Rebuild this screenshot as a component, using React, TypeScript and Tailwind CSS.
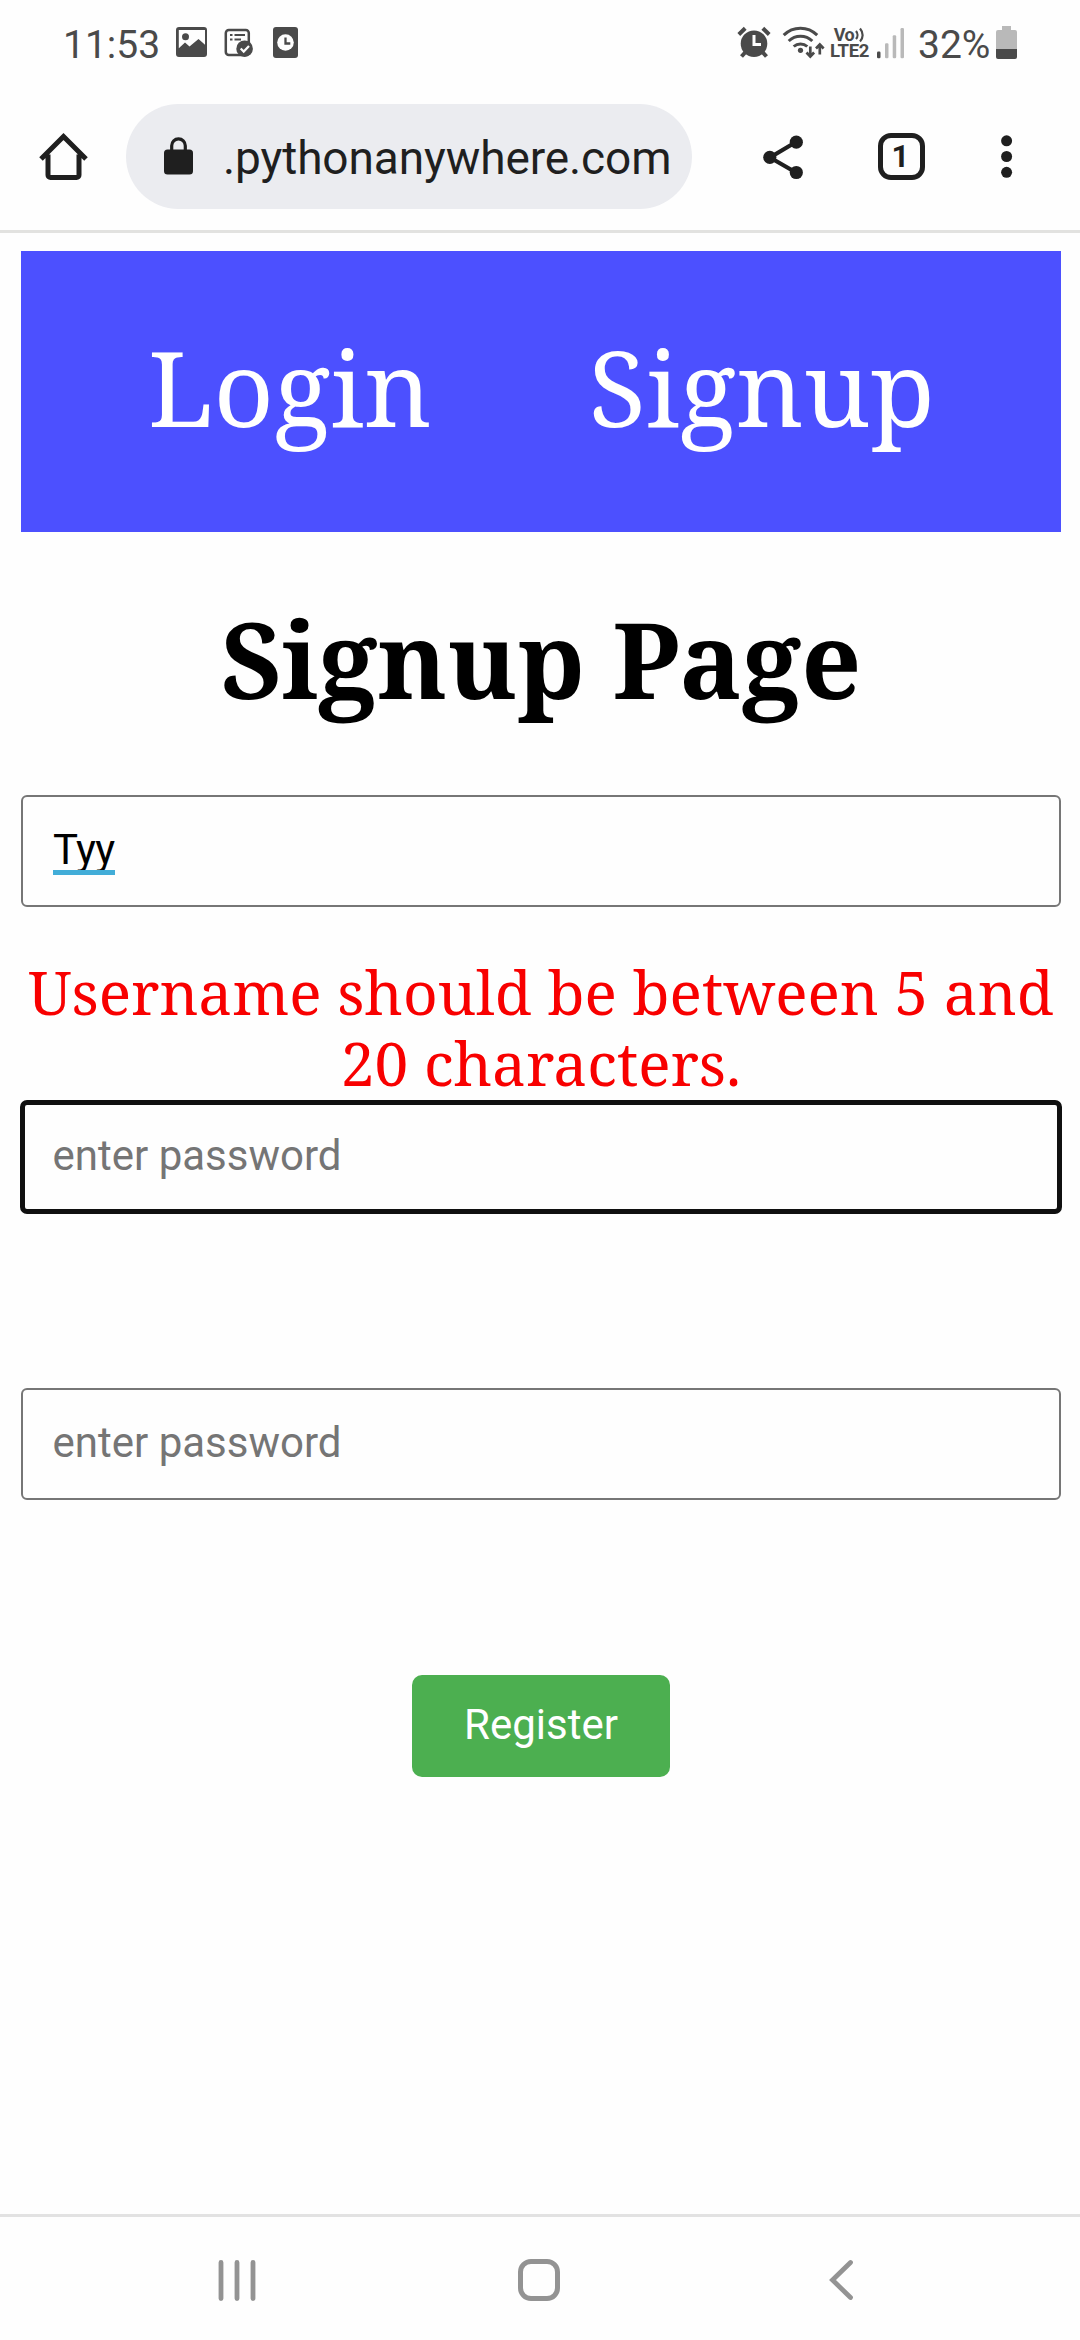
import type { ReactNode } from "react";

/** An icon drawn in screen pixels; the view box is cut from the bar that holds it. */
function Glyph({ x, y, w, h, className = "", children }: { x: number; y: number; w: number; h: number; className?: string; children: ReactNode }) {
  return (
    <svg width={w} height={h} viewBox={`${x} ${y} ${w} ${h}`} className={`shrink-0 ${className}`} fill="currentColor" aria-hidden="true">
      {children}
    </svg>
  );
}

function StatusBar() {
  return (
    <header className="flex h-[84px] items-start justify-between pl-[63px] pr-[63px] text-[#4a4a4a]">
      <div className="flex items-start">
        <span className="w-[113px] pt-[22px] text-[39px] leading-[46px]">11:53</span>
        <Glyph x={176} y={0} w={31} h={84}>
          <path fillRule="evenodd" d="M179 27h25a3 3 0 0 1 3 3v24a3 3 0 0 1-3 3h-25a3 3 0 0 1-3-3V30a3 3 0 0 1 3-3Zm-.2 3v18.2l6.2-5.7 4.5 4 9-7.5 6.500 5.800V30Z" />
          <circle cx="185.500" cy="36.800" r="3.500" />
        </Glyph>
        <Glyph x={224} y={0} w={30} h={84} className="ml-[17px]">
          <rect x="225.800" y="30" width="23" height="25" rx="3" fill="none" stroke="currentColor" strokeWidth="2.500" />
          <path d="M230 34h2.500v2H230zM234.500 34h10.500v2h-10.500zM230 38.500h2.500v2H230zM234.500 38.500h6.500v2h-6.500z" />
          <circle cx="244.600" cy="48.700" r="8.300" />
          <path d="m240.700 48.500 3 3.100 5.300-5.600" fill="none" stroke="#fefefe" strokeWidth="2.200" />
        </Glyph>
        <Glyph x={273} y={0} w={26} h={84} className="ml-[19px]">
          <rect x="273" y="27" width="25" height="31" rx="3" />
          <circle cx="285.500" cy="42.500" r="8.300" fill="#fefefe" />
          <path d="M285.500 37.500v6h4.800" fill="none" stroke="currentColor" strokeWidth="2.300" />
        </Glyph>
      </div>
      <div className="flex items-start">
        <Glyph x={737} y={0} w={35} h={84}>
          <circle cx="754" cy="43.700" r="13.300" />
          <path d="m738.800 34.500 6.400-6.200M769.200 34.500l-6.400-6.200" stroke="currentColor" strokeWidth="4" />
          <path d="m746 51.500-4.500 5M762 51.500l4.500 5" stroke="currentColor" strokeWidth="4" />
          <path d="M754 35v9.500h7" fill="none" stroke="#fefefe" strokeWidth="3" />
        </Glyph>
        <Glyph x={782} y={0} w={44} h={84} className="ml-[10px]">
          <g fill="none" stroke="currentColor" strokeWidth="3">
            <path d="M783.700 35.200c9.500-9.200 24-9.200 33.500 0" />
            <path d="M788.700 41c6.600-6.300 17-6.300 23.600 0" />
            <path d="M793.700 46.500c3.900-3.500 9.700-3.500 13.600 0" />
          </g>
          <circle cx="800.500" cy="50.300" r="2.600" />
          <g fill="none" stroke="currentColor" strokeWidth="2.700">
            <path d="M810.300 46.500v10M806.500 52.500l3.800 4 3.800-4" />
            <path d="M819.800 54.500v-10M816 48.500l3.800-4 3.800 4" />
          </g>
        </Glyph>
        <div className="ml-[3px] flex w-[41px] flex-col items-center pt-[26px] font-bold">
          <span className="flex h-[17px] items-center text-[18px] leading-[17px] tracking-[-0.5px]">
            Vo
            <Glyph x={0} y={0} w={11} h={17}>
              <path d="M2 5c2 2.300 2 5.700 0 8M6 2.500c3.500 4 3.500 9.500 0 13" fill="none" stroke="currentColor" strokeWidth="2.200" />
            </Glyph>
          </span>
          <span className="text-[18.500px] leading-[17px] tracking-[-0.3px]">LTE2</span>
        </div>
        <Glyph x={876} y={0} w={29} h={84} className="ml-[6px]">
          <rect x="877" y="51.500" width="3.500" height="6.700" rx="1.200" />
          <g fill="#b9b9b9">
            <rect x="885" y="43.300" width="3.500" height="14.900" rx="1.200" />
            <rect x="892.700" y="35.300" width="3.500" height="22.900" rx="1.200" />
            <rect x="900.500" y="28" width="3.500" height="30.200" rx="1.200" />
          </g>
        </Glyph>
        <span className="ml-[13px] w-[78px] pt-[22px] text-[39px] leading-[46px]">32%</span>
        <Glyph x={996} y={0} w={21} h={84}>
          <path d="M1002 26h9v4h4a2 2 0 0 1 2 2v18h-21V32a2 2 0 0 1 2-2h4Z" fill="#b9b9b9" />
          <path d="M996 49h21v8a2 2 0 0 1-2 2h-17a2 2 0 0 1-2-2Z" />
        </Glyph>
      </div>
    </header>
  );
}

function BrowserBar() {
  return (
    <div className="flex h-[149px] items-start border-b-[3px] border-[#e2e2e0] pl-[38px] text-[#1f1f1f]">
      <Glyph x={38} y={84} w={52} h={146}>
        <path d="M48 154.500V175a2.500 2.500 0 0 0 2.500 2.500h26a2.500 2.500 0 0 0 2.500-2.500V154.500M41 159 63.500 136.500 86 159" fill="none" stroke="currentColor" strokeWidth="5" />
      </Glyph>
      <div className="ml-[36px] mt-[20px] flex h-[105px] w-[566px] items-center rounded-full bg-[#ebecf0] pl-[38px]">
        <Glyph x={164} y={137} w={29} h={38} className="mb-[1px]">
          <rect x="164" y="149.500" width="29" height="25" rx="3.500" />
          <path d="M171.700 151v-5.300a6.800 6.800 0 0 1 13.600 0V151" fill="none" stroke="currentColor" strokeWidth="3.200" />
        </Glyph>
        <span className="ml-[30px] whitespace-nowrap pt-[2px] text-[46px] leading-[54px] tracking-[-0.100px]">.pythonanywhere.com</span>
      </div>
      <Glyph x={762} y={84} w={42} h={146} className="ml-[70px]">
        <path d="M796 142 770 157.500 796 172.500" fill="none" stroke="currentColor" strokeWidth="4.200" />
        <circle cx="796.300" cy="142.200" r="6.600" />
        <circle cx="769.800" cy="157.300" r="6.600" />
        <circle cx="796.300" cy="172.500" r="6.600" />
      </Glyph>
      <div className="ml-[74px] mt-[49px] flex h-[47px] w-[47px] items-center justify-center rounded-[13px] border-[5px] border-[#1f1f1f] text-[31px] font-bold leading-none">
        <span className="-mt-[1px] mr-[2px]">1</span>
      </div>
      <Glyph x={1000} y={84} w={14} h={146} className="ml-[75px]">
        <circle cx="1006.600" cy="140.800" r="5.500" />
        <circle cx="1006.600" cy="156.500" r="5.500" />
        <circle cx="1006.600" cy="172.300" r="5.500" />
      </Glyph>
    </div>
  );
}

function SignupPage() {
  return (
    <main className="ml-[21px] flex w-[1040px] grow flex-col items-center self-start font-['Noto_Serif',serif]">
      <nav className="mt-[18px] flex h-[281px] w-full gap-[157px] bg-[#4c50ff] pl-[127px] pt-[66px] text-[105px] leading-[140px] text-white">
        <a>Login</a>
        <a>Signup</a>
      </nav>
      <h1 className="mt-[57px] text-[105px] font-bold leading-[140px] text-black">Signup Page</h1>
      <div className="mt-[66px] flex h-[112px] w-full items-center rounded-[6px] border-2 border-[#767676] pb-[3px] pl-[30px] font-[Roboto,sans-serif] text-[42px] leading-[50px] text-black">
        <span className="relative tracking-[-0.600px]">
          Tyy
          <span className="absolute bottom-0 left-0 h-[5px] w-[62px] bg-[#42add8]" />
        </span>
      </div>
      <p className="mt-[49px] whitespace-nowrap text-center text-[60.375px] leading-[71px] text-[#f80000]">
        Username should be between 5 and
        <br />
        20 characters.
      </p>
      <input
        type="password"
        placeholder="enter password"
        className="mt-[2px] h-[114px] w-[1042px] rounded-[7px] border-[5px] border-[#101010] pb-[3px] pl-[27.500px] font-[Roboto,sans-serif] text-[42px] leading-[50px] placeholder:text-[#757575]"
      />
      <input
        type="password"
        placeholder="enter password"
        className="mt-[174px] h-[112px] w-full rounded-[6px] border-2 border-[#767676] pb-[3px] pl-[29.500px] font-[Roboto,sans-serif] text-[42px] leading-[50px] placeholder:text-[#757575]"
      />
      <button className="mt-[175px] h-[102px] w-[258px] rounded-[10px] bg-[#4caf50] pb-[2px] font-[Roboto,sans-serif] text-[42px] leading-[50px] text-white">Register</button>
    </main>
  );
}

function NavigationBar() {
  return (
    <footer className="flex h-[126px] items-start border-t-[3px] border-[#e2e2e2] pl-[217px] text-[#939393]">
      <Glyph x={217} y={2217} w={40} h={123}>
        <path d="M221 2262.500v36M237 2262.500v36M253 2262.500v36" stroke="currentColor" strokeWidth="4.800" strokeLinecap="round" />
      </Glyph>
      <Glyph x={516} y={2217} w={46} h={123} className="ml-[259px]">
        <rect x="520.500" y="2261.500" width="37" height="37" rx="10.500" fill="none" stroke="currentColor" strokeWidth="5" />
      </Glyph>
      <Glyph x={828} y={2217} w={28} h={123} className="ml-[266px]">
        <path d="m850.500 2262.500-18 17.500 18 17.500" fill="none" stroke="currentColor" strokeWidth="4.800" strokeLinecap="round" />
      </Glyph>
    </footer>
  );
}

export default function App() {
  return (
    <div className="flex h-[2340px] w-[1080px] flex-col overflow-hidden bg-[#fefefe] font-[Roboto,sans-serif]">
      <StatusBar />
      <BrowserBar />
      <SignupPage />
      <NavigationBar />
    </div>
  );
}
